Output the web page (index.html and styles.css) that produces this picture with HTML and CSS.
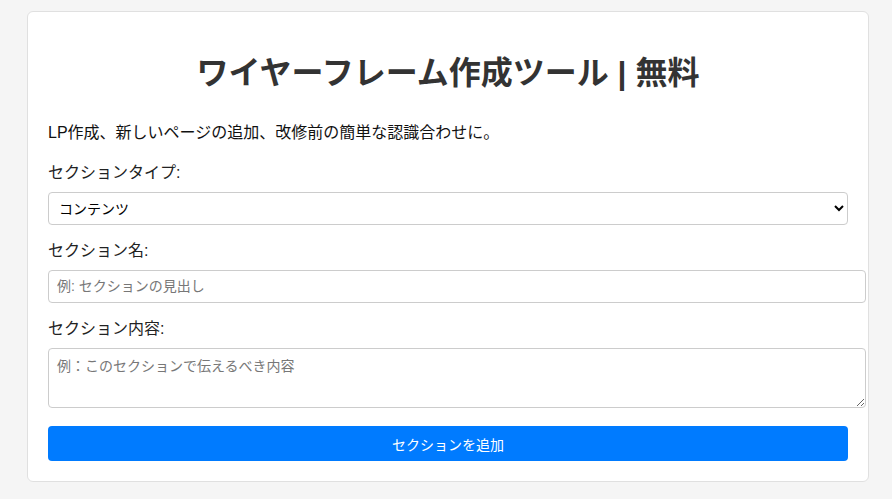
FILE: index.html
```html
<!DOCTYPE html>
<html lang="ja">
<head>
<meta charset="utf-8">
<title>ワイヤーフレーム作成ツール</title>
<link rel="stylesheet" href="styles.css">
</head>
<body>
<div class="container">
  <h1 class="title">ワイヤーフレーム作成ツール | 無料</h1>
  <p class="lead">LP作成、新しいページの追加、改修前の簡単な認識合わせに。</p>
  <form class="form">
    <label class="label" for="type">セクションタイプ:</label>
    <select class="select" id="type">
      <option>コンテンツ</option>
      <option>ヘッダー</option>
      <option>フッター</option>
    </select>
    <label class="label" for="name">セクション名:</label>
    <input class="input" id="name" type="text" placeholder="例: セクションの見出し">
    <label class="label" for="content">セクション内容:</label>
    <textarea class="textarea" id="content" placeholder="例：このセクションで伝えるべき内容"></textarea>
    <button class="button" type="button">セクションを追加</button>
  </form>
</div>
</body>
</html>
```
FILE: styles.css
```css
html, body {
  margin: 0;
  padding: 0;
}
body {
  background: #f5f5f5;
  font-family: "Liberation Sans", "Noto Sans CJK JP", sans-serif;
  color: #222;
  padding-top: 11px;
}
.container {
  width: 800px;
  margin: 0 0 0 27px;
  padding: 20px;
  background: #fff;
  border: 1px solid #e0e0e0;
  border-radius: 6px;
}
.title {
  margin: 20px 0 27px;
  font-size: 32px;
  line-height: 42px;
  text-align: center;
  color: #333;
  font-weight: bold;
}
.lead {
  margin: 0 0 16px;
  font-size: 16px;
  line-height: 24px;
  color: #111;
}
.form {
  display: flex;
  flex-direction: column;
  align-items: flex-start;
}
.label {
  display: block;
  font-size: 16px;
  line-height: 24px;
  margin-bottom: 7px;
  color: #222;
}
.select {
  width: 800px;
  height: 33px;
  margin: 0 0 14px;
  padding: 0 6px;
  font-family: inherit;
  font-size: 14px;
  color: #000;
  background: #fff;
  border: 1px solid #ccc;
  border-radius: 4px;
}
.input {
  box-sizing: content-box;
  width: 800px;
  height: 15px;
  line-height: 15px;
  margin: 0 0 14px;
  padding: 8px;
  font-family: inherit;
  font-size: 14px;
  border: 1px solid #ccc;
  border-radius: 4px;
}
.textarea {
  box-sizing: content-box;
  width: 800px;
  height: 42px;
  margin: 0 0 18px;
  padding: 8px;
  font-family: inherit;
  font-size: 14px;
  line-height: 18px;
  border: 1px solid #ccc;
  border-radius: 4px;
  display: block;
}
.input::placeholder,
.textarea::placeholder {
  color: #777;
}
.button {
  width: 800px;
  height: 35px;
  background: #007bff;
  color: #fff;
  border: none;
  border-radius: 4px;
  font-family: inherit;
  font-size: 14px;
  cursor: pointer;
}
```
